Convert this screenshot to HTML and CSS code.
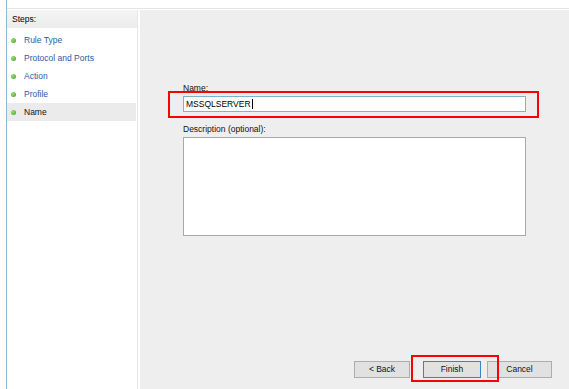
FILE: index.html
```html
<!DOCTYPE html>
<html lang="en">

<head>
    <meta charset="UTF-8">
    <title>New Inbound Rule Wizard</title>
    <link rel="stylesheet" href="styles.css">
</head>

<body>
    <div class="edge"></div>
    <div class="window">
        <div class="top-strip"></div>
        <div class="main">
            <div class="steps">
                <div class="steps-header">Steps:</div>
                <ul class="step-list">
                    <li class="step"><span class="dot"></span>Rule Type</li>
                    <li class="step"><span class="dot"></span>Protocol and Ports</li>
                    <li class="step"><span class="dot"></span>Action</li>
                    <li class="step"><span class="dot"></span>Profile</li>
                    <li class="step current"><span class="dot"></span>Name</li>
                </ul>
            </div>
            <div class="panel">
                <div class="form">
                    <label class="field-label">Name:</label>
                    <div class="name-field">
                        <div class="text-input"><span class="typed">MSSQLSERVER</span></div>
                        <div class="mark mark-name"></div>
                    </div>
                    <label class="field-label desc-label">Description (optional):</label>
                    <div class="text-area"></div>
                </div>
                <div class="buttons">
                    <div class="btn btn-back">&lt; Back</div>
                    <div class="finish-wrap">
                        <div class="btn btn-finish">Finish</div>
                        <div class="mark mark-finish"></div>
                    </div>
                    <div class="btn btn-cancel">Cancel</div>
                </div>
            </div>
        </div>
    </div>
</body>

</html>
```

FILE: styles.css
```css
html,
body {
    height: 100%;
}

body {
    margin: 0;
    display: flex;
    background-color: #fff;
    font-family: "Liberation Sans", Arial, sans-serif;
    font-size: 8.5px;
    color: #111;
    overflow: hidden;
}

.edge {
    width: 6px;
    flex: none;
    border-right: 1px solid #8fb9d2;
    background: #fff;
}

.window {
    flex: 1;
    display: flex;
    flex-direction: column;
}

.top-strip {
    height: 8px;
    border-bottom: 1px solid #e4e4e4;
    margin-bottom: 1px;
}

.main {
    flex: 1;
    display: flex;
}

/* left column with wizard steps */
.steps {
    width: 130px;
    flex: none;
    background: #fff;
    border-right: 1px solid #e6e6e6;
    margin-right: 2px;
}

.steps-header {
    height: 18px;
    line-height: 18px;
    padding-left: 5px;
    background: linear-gradient(#f5f5f5, #ececec);
    color: #000;
}

.step-list {
    list-style: none;
    margin: 3px 0 0 0;
    padding: 0;
}

.step {
    height: 18px;
    line-height: 18px;
    display: flex;
    align-items: center;
    color: #1f5ca6;
    margin-right: 1px;
}

.step.current {
    color: #111;
    background: #ebebeb;
}

.dot {
    width: 5px;
    height: 5px;
    border-radius: 50%;
    background: radial-gradient(circle at 35% 35%, #9be07a, #3f9c22);
    margin-left: 4px;
    margin-right: 8px;
}

/* right panel */
.panel {
    flex: 1;
    background: #eeeeee;
    display: flex;
    flex-direction: column;
    padding: 73px 17px 11px 43px;
}

.form {
    width: 343px;
    display: flex;
    flex-direction: column;
}

.field-label {
    height: 10px;
    line-height: 10px;
    color: #111;
}

.desc-label {
    margin-top: 12px;
}

.name-field {
    position: relative;
    margin-top: 3px;
}

.text-input {
    height: 14px;
    border: 1px solid #7fb2cc;
    background: #fff;
    line-height: 14px;
    padding-left: 2px;
    color: #000;
}

.typed {
    border-right: 1px solid #000;
    padding-right: 1px;
}

.text-area {
    margin-top: 3px;
    height: 97px;
    border: 1px solid #a9a9a9;
    background: #fff;
}

.buttons {
    margin-top: auto;
    display: flex;
    justify-content: flex-end;
}

.btn {
    height: 15px;
    line-height: 15px;
    border: 1px solid #adadad;
    background: #e1e1e1;
    text-align: center;
    color: #111;
}

.btn-back {
    width: 54px;
    margin-right: 13px;
}

.btn-finish {
    width: 56px;
    border-color: #3a84c4;
}

.finish-wrap {
    position: relative;
    margin-right: 6px;
}

.btn-cancel {
    width: 63px;
}

/* red annotation boxes drawn over the dialog */
.mark {
    position: absolute;
    border: 2px solid #f00;
    pointer-events: none;
}

.mark-name {
    left: -15px;
    top: -5px;
    right: -13px;
    bottom: -6px;
}

.mark-finish {
    left: -12px;
    top: -6px;
    right: -18px;
    bottom: -4px;
}
```
